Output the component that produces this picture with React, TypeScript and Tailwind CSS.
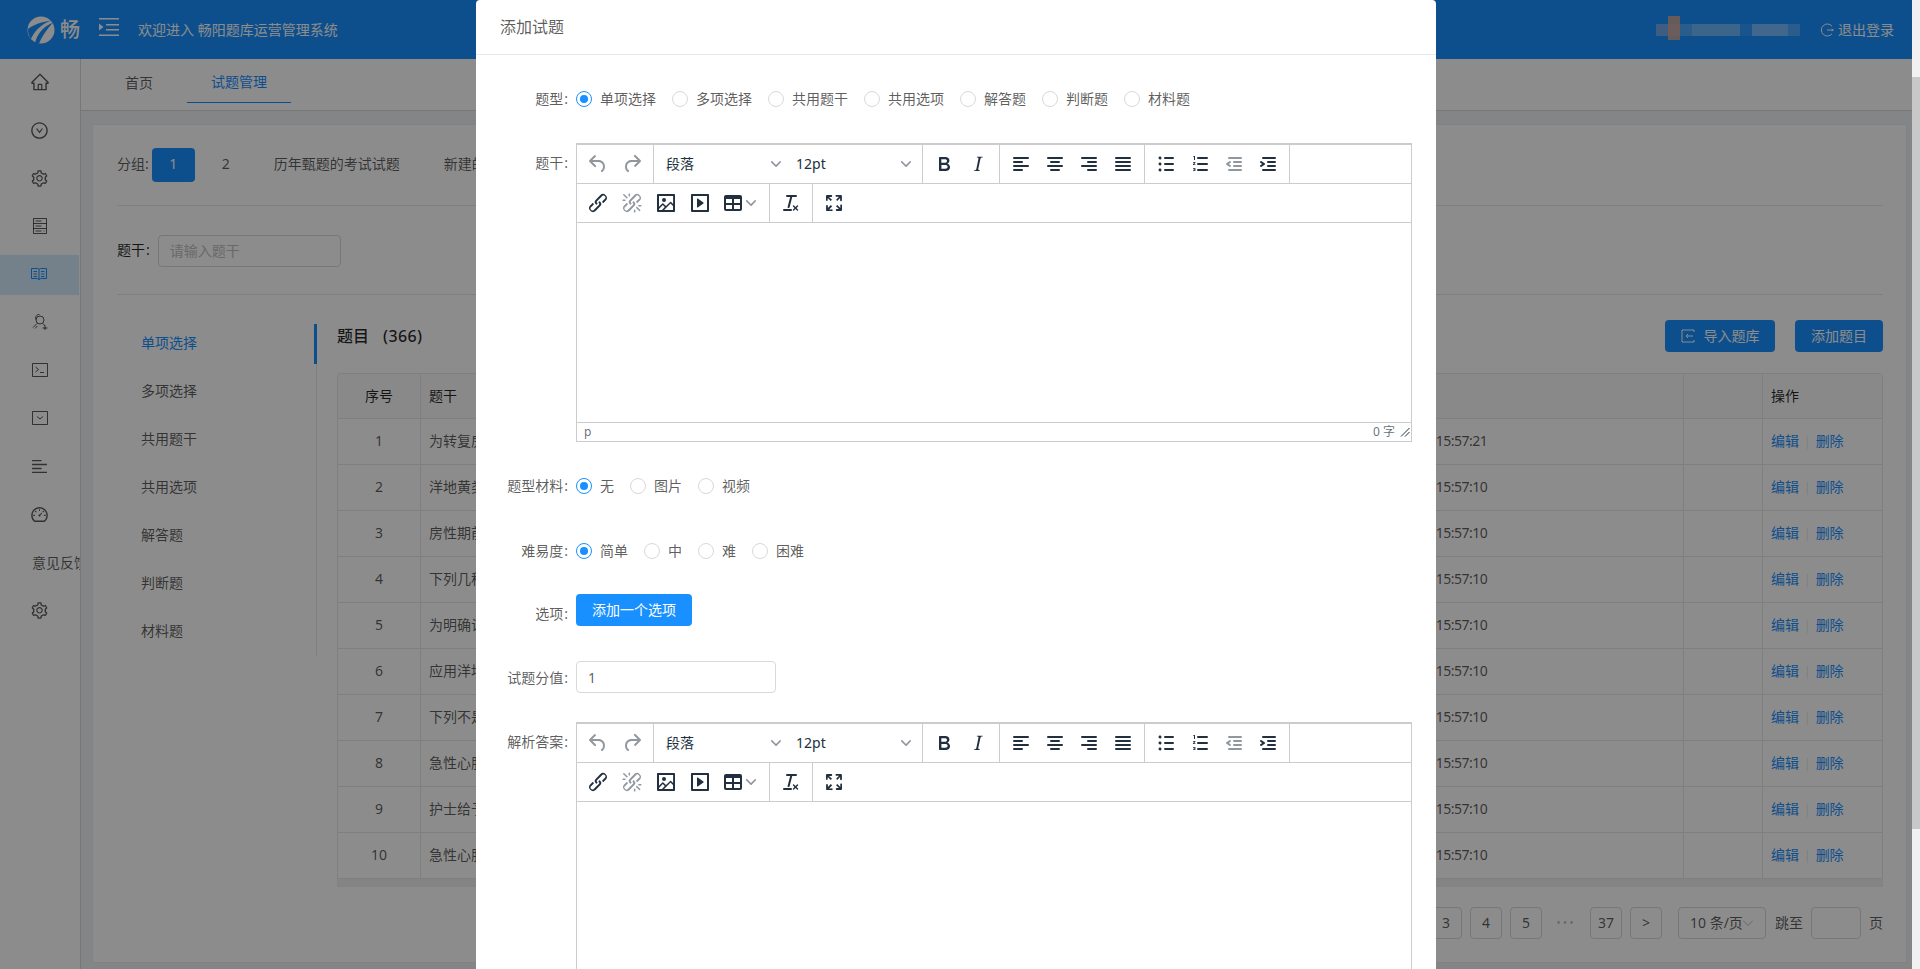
import type { ReactNode } from "react"
import {
  AiOutlineAlignLeft,
  AiOutlineDashboard,
  AiOutlineDownCircle,
  AiOutlineHome,
  AiOutlineSetting,
} from "react-icons/ai"

function ServerIcon() {
  return (
    <svg width="16" height="16" viewBox="0 0 16 16" fill="none" stroke="currentColor">
      <path d="M1.5.5h13v15h-13zM1.5 5.5h13M1.5 10.5h13M3.5 3h6M3.5 8h6M3.5 13h6M11.5 13h1" />
    </svg>
  )
}

function BookIcon() {
  return (
    <svg width="16" height="16" viewBox="0 0 16 16" fill="none" stroke="currentColor">
      <path d="M.5 2.5H6c1 0 2 .5 2 1.2 0-.7 1-1.2 2-1.2h5.500v10H10c-1 0-2 .5-2 1.500 0-1-1-1.500-2-1.500H.5zM8 3.700V14M2.500 5.500h3.500M2.500 8h3.500M2.500 10.500h3.500M10 5.500h3.500M10 8h3.500M10 10.500h3.500" />
    </svg>
  )
}

function UserAddIcon() {
  return (
    <svg width="16" height="16" viewBox="0 0 16 16" fill="none" stroke="currentColor">
      <circle cx="8" cy="6" r="4" />
      <path d="M4.500 1.800C5.200.7 6.200.3 7.500.5M4 5.500C3.200 4 3.500 2.800 4.500 1.800M5 9.500 1 13.500M3 14.500 5.500 12M11 9.500l2 2.500M10.500 14h5M13 11.500v4.500" />
    </svg>
  )
}

function TerminalIcon() {
  return (
    <svg width="16" height="16" viewBox="0 0 16 16" fill="none" stroke="currentColor">
      <path d="M.5 1.500h15v13H.5zM3.500 5l3 2.500-3 2.500M8 10.500h4" />
    </svg>
  )
}

function DownBoxIcon() {
  return (
    <svg width="16" height="16" viewBox="0 0 16 16" fill="none" stroke="currentColor">
      <path d="M.5 1.500h15v13H.5zM5 6.500l3 2.500 3-2.500" />
    </svg>
  )
}

const sideItems: { icon?: ReactNode; label?: string; active?: boolean }[] = [
  { icon: <AiOutlineHome className="text-[20px]" /> },
  { icon: <AiOutlineDownCircle className="text-[19px]" /> },
  { icon: <AiOutlineSetting className="text-[19px]" /> },
  { icon: <ServerIcon /> },
  { icon: <BookIcon />, active: true },
  { icon: <UserAddIcon /> },
  { icon: <TerminalIcon /> },
  { icon: <DownBoxIcon /> },
  { icon: <AiOutlineAlignLeft className="text-[19px]" /> },
  { icon: <AiOutlineDashboard className="text-[19px]" /> },
  { label: "意见反馈" },
  { icon: <AiOutlineSetting className="text-[19px]" /> },
]

const questionTypes = ["单项选择", "多项选择", "共用题干", "共用选项", "解答题", "判断题", "材料题"]

const rows = [
  ["1", "为转复房颤的药物", "15:57:21"],
  ["2", "洋地黄类药物", "15:57:10"],
  ["3", "房性期前收缩", "15:57:10"],
  ["4", "下列几种情况", "15:57:10"],
  ["5", "为明确诊断", "15:57:10"],
  ["6", "应用洋地黄", "15:57:10"],
  ["7", "下列不是", "15:57:10"],
  ["8", "急性心肌梗死", "15:57:10"],
  ["9", "护士给予", "15:57:10"],
  ["10", "急性心肌梗死", "15:57:10"],
]

const ICONS: Record<string, string> = {
  undo: "M6.4 8H12c3.7 0 6.2 2 6.8 5.1.6 2.7-.4 5.6-2.3 6.8a1 1 0 0 1-1-1.8c1.1-.6 1.8-2.7 1.4-4.6-.5-2.1-2.1-3.5-4.9-3.5H6.4l3.3 3.3a1 1 0 1 1-1.4 1.4l-5-5a1 1 0 0 1 0-1.4l5-5a1 1 0 0 1 1.4 1.4L6.4 8z",
  redo: "M17.6 10H12c-2.8 0-4.4 1.4-4.9 3.5-.4 2 .3 4 1.4 4.6a1 1 0 1 1-1 1.8c-2-1.2-2.9-4.1-2.3-6.8.6-3 3-5.1 6.8-5.1h5.6l-3.3-3.3a1 1 0 1 1 1.4-1.4l5 5a1 1 0 0 1 0 1.4l-5 5a1 1 0 0 1-1.4-1.4l3.3-3.3z",
  bold: "M7.8 19c-.3 0-.5 0-.6-.2l-.2-.5V5.7c0-.2 0-.4.2-.5l.6-.2h5c1.5 0 2.7.3 3.5 1 .7.6 1.1 1.4 1.1 2.5a3 3 0 0 1-.6 1.9c-.4.6-1 1-1.6 1.2.4.1.9.3 1.3.6s.8.7 1 1.2c.4.4.5 1 .5 1.6 0 1.3-.4 2.3-1.3 3-.8.7-2.1 1-3.8 1H7.8zm5-8.3c.6 0 1.2-.1 1.6-.5.4-.3.6-.7.6-1.3 0-1.1-.8-1.7-2.3-1.7H9.3v3.5h3.4zm.5 6c.7 0 1.3-.1 1.7-.4.4-.4.6-.9.6-1.5s-.2-1-.7-1.4c-.4-.3-1-.4-2-.4H9.4v3.8h4z",
  italic: "M16.7 4.7l-.1.9h-.3c-.6 0-1 0-1.4.3-.3.3-.4.6-.5 1.1l-2.1 9.8v.6c0 .5.4.8 1.4.8h.2l-.2.8H8l.2-.8h.2c1.1 0 1.8-.5 2-1.5l2-9.8.1-.5c0-.6-.4-.8-1.4-.8h-.3l.2-.9h5.8z",
  left: "M5 5h14a1 1 0 0 1 0 2H5a1 1 0 1 1 0-2zm0 4h8a1 1 0 0 1 0 2H5a1 1 0 1 1 0-2zm0 8h8a1 1 0 0 1 0 2H5a1 1 0 0 1 0-2zm0-4h14a1 1 0 0 1 0 2H5a1 1 0 0 1 0-2z",
  center: "M5 5h14a1 1 0 0 1 0 2H5a1 1 0 1 1 0-2zm3 4h8a1 1 0 0 1 0 2H8a1 1 0 1 1 0-2zm0 8h8a1 1 0 0 1 0 2H8a1 1 0 0 1 0-2zm-3-4h14a1 1 0 0 1 0 2H5a1 1 0 0 1 0-2z",
  right: "M5 5h14a1 1 0 0 1 0 2H5a1 1 0 1 1 0-2zm6 4h8a1 1 0 0 1 0 2h-8a1 1 0 0 1 0-2zm0 8h8a1 1 0 0 1 0 2h-8a1 1 0 0 1 0-2zm-6-4h14a1 1 0 0 1 0 2H5a1 1 0 0 1 0-2z",
  justify: "M5 5h14a1 1 0 0 1 0 2H5a1 1 0 1 1 0-2zm0 4h14a1 1 0 0 1 0 2H5a1 1 0 1 1 0-2zm0 4h14a1 1 0 0 1 0 2H5a1 1 0 0 1 0-2zm0 4h14a1 1 0 0 1 0 2H5a1 1 0 0 1 0-2z",
  bullist: "M11 5h8a1 1 0 0 1 0 2h-8a1 1 0 0 1 0-2zm0 6h8a1 1 0 0 1 0 2h-8a1 1 0 0 1 0-2zm0 6h8a1 1 0 0 1 0 2h-8a1 1 0 0 1 0-2zM4.5 6c0-.4.1-.8.4-1 .3-.4.7-.5 1.1-.5s.8.1 1 .4c.4.3.5.7.5 1.1s-.1.8-.4 1c-.3.4-.7.5-1.1.5s-.8-.1-1-.4c-.4-.3-.5-.7-.5-1.1zm0 6c0-.4.1-.8.4-1 .3-.4.7-.5 1.1-.5s.8.1 1 .4c.4.3.5.7.5 1.1s-.1.8-.4 1c-.3.4-.7.5-1.1.5s-.8-.1-1-.4c-.4-.3-.5-.7-.5-1.1zm0 6c0-.4.1-.8.4-1 .3-.4.7-.5 1.1-.5s.8.1 1 .4c.4.3.5.7.5 1.1s-.1.8-.4 1c-.3.4-.7.5-1.1.5s-.8-.1-1-.4c-.4-.3-.5-.7-.5-1.1z",
  numlist: "M10 17h9a1 1 0 0 1 0 2h-9a1 1 0 0 1 0-2zm0-6h9a1 1 0 0 1 0 2h-9a1 1 0 0 1 0-2zm0-6h9a1 1 0 0 1 0 2h-9a1 1 0 0 1 0-2zM5.4 4H7v4H6V5h-.6V4zM5 10h2.4v.8L6 12.2h1.4v.8H5v-.8l1.4-1.4H5V10zm0 6h2.4v3H5v-.7h1.5v-.5H5.6v-.6h.9v-.5H5V16z",
  outdent: "M7 5h12a1 1 0 0 1 0 2H7a1 1 0 1 1 0-2zm5 4h7a1 1 0 0 1 0 2h-7a1 1 0 0 1 0-2zm0 4h7a1 1 0 0 1 0 2h-7a1 1 0 0 1 0-2zm-5 4h12a1 1 0 0 1 0 2H7a1 1 0 0 1 0-2zm1.6-3.8a1 1 0 0 1-1.2 1.6l-3-2a1 1 0 0 1 0-1.6l3-2a1 1 0 0 1 1.2 1.6L6.8 12l1.8 1.2z",
  indent: "M7 5h12a1 1 0 0 1 0 2H7a1 1 0 1 1 0-2zm5 4h7a1 1 0 0 1 0 2h-7a1 1 0 0 1 0-2zm0 4h7a1 1 0 0 1 0 2h-7a1 1 0 0 1 0-2zm-5 4h12a1 1 0 0 1 0 2H7a1 1 0 0 1 0-2zm-2.6-3.8L6.2 12l-1.8-1.2a1 1 0 0 1 1.2-1.6l3 2a1 1 0 0 1 0 1.6l-3 2a1 1 0 1 1-1.2-1.6z",
  link: "M6.2 12.3a1 1 0 0 1 1.4 1.4l-2 2a2 2 0 1 0 2.6 2.8l4.8-4.8a1 1 0 0 0 0-1.4 1 1 0 1 1 1.4-1.3 2.9 2.9 0 0 1 0 4L9.6 20a3.9 3.9 0 0 1-5.5-5.5l2-2zm11.6-.6a1 1 0 0 1-1.4-1.4l2-2a2 2 0 1 0-2.6-2.8L11 10.3a1 1 0 0 0 0 1.4A1 1 0 1 1 9.6 13a2.9 2.9 0 0 1 0-4L14.4 4a3.9 3.9 0 0 1 5.5 5.5l-2 2z",
  unlink: "M6.2 12.3a1 1 0 0 1 1.4 1.4l-2.1 2a2 2 0 1 0 2.7 2.8l4.8-4.8a1 1 0 0 0 0-1.4 1 1 0 1 1 1.4-1.3 2.9 2.9 0 0 1 0 4L9.6 20a3.9 3.9 0 0 1-5.5-5.5l2-2zm11.6-.6a1 1 0 0 1-1.4-1.4l2.1-2a2 2 0 1 0-2.7-2.8L11 10.3a1 1 0 0 0 0 1.4A1 1 0 1 1 9.6 13a2.9 2.9 0 0 1 0-4L14.4 4a3.9 3.9 0 0 1 5.5 5.5l-2 2zM7.6 6.3a.8.8 0 0 1-1 1.1L3.3 4.2a.7.7 0 1 1 1-1l3.2 3.1zM5.1 8.6a.8.8 0 0 1 0 1.5H3a.8.8 0 0 1 0-1.5H5zm5-3.5a.8.8 0 0 1-1.5 0V3a.8.8 0 0 1 1.5 0v2zm6 11.8a.8.8 0 0 1 1-1l3.2 3.2a.8.8 0 0 1-1 1L16 17zm-2.2 2a.8.8 0 0 1 1.5 0V21a.8.8 0 0 1-1.5 0V19zm5-3.5a.7.7 0 1 1 0-1.5H21a.8.8 0 0 1 0 1.5H19z",
  image: "M5 15.7l3.3-3.2c.3-.3.7-.3 1 0L12 15l4.1-4c.3-.4.8-.4 1 0l2 1.9V5H5v10.7zM5 18V19h3l2.8-2.9-2-2L5 17.9zm14-3l-2.5-2.4-6.4 6.5H19v-4zM4 3h16c.6 0 1 .4 1 1v16c0 .6-.4 1-1 1H4a1 1 0 0 1-1-1V4c0-.6.4-1 1-1zm6 8a2 2 0 1 0 0-4 2 2 0 0 0 0 4z",
  media: "M4 3h16c.6 0 1 .4 1 1v16c0 .6-.4 1-1 1H4a1 1 0 0 1-1-1V4c0-.6.4-1 1-1zm1 2v14h14V5H5zm4.8 2.6l5.6 4a.5.5 0 0 1 0 .8l-5.6 4A.5.5 0 0 1 9 16V8a.5.5 0 0 1 .8-.4z",
  table: "M19 4a2 2 0 0 1 2 2v12a2 2 0 0 1-2 2H5a2 2 0 0 1-2-2V6c0-1.1.9-2 2-2h14zM5 14v4h6v-4H5zm14 0h-6v4h6v-4zm0-6h-6v4h6V8zM5 12h6V8H5v4z",
  clear: "M13.2 6a1 1 0 0 1 0 .2l-2.6 10a1 1 0 0 1-1 .8h-.2a.8.8 0 0 1-.8-1l2.6-10H8a1 1 0 1 1 0-2h9a1 1 0 0 1 0 2h-3.8zM5 18h7a1 1 0 0 1 0 2H5a1 1 0 0 1 0-2zm13 1.5L16.5 18 15 19.5a.7.7 0 0 1-1-1l1.5-1.5-1.5-1.5a.7.7 0 0 1 1-1l1.5 1.5 1.5-1.5a.7.7 0 0 1 1 1L17.5 17l1.5 1.5a.7.7 0 0 1-1 1z",
  fullscreen: "M15.3 10l-1.2-1.3 2.9-3h-2.3a.9.9 0 1 1 0-1.7H19c.5 0 .9.4.9.9v4.4a.9.9 0 1 1-1.8 0V7l-2.9 3zm0 4l3 3v-2.3a.9.9 0 1 1 1.7 0V19c0 .5-.4.9-.9.9h-4.4a.9.9 0 1 1 0-1.8H17l-3-2.9 1.3-1.2zM10 15.4l-2.9 3h2.3a.9.9 0 1 1 0 1.7H5a.9.9 0 0 1-.9-.9v-4.4a.9.9 0 1 1 1.8 0V17l2.9-3 1.2 1.3zM8.7 10L5.7 7v2.3a.9.9 0 0 1-1.7 0V5c0-.5.4-.9.9-.9h4.4a.9.9 0 0 1 0 1.8H7l3 2.9-1.3 1.2z",
}

function Chevron() {
  return (
    <svg width="10" height="10" viewBox="0 0 10 10" className="shrink-0 fill-[#222f3e]/50">
      <path d="M8.7 2.2c.3-.3.8-.3 1 0 .4.4.4.9 0 1.2L5.7 7.8c-.3.3-.9.3-1.2 0L.2 3.4a.8.8 0 0 1 0-1.2c.3-.3.8-.3 1.1 0L5 6l3.7-3.8z" />
    </svg>
  )
}

function ToolBtn({ name, off }: { name: string; off?: boolean }) {
  return (
    <span className="flex h-[38px] w-[34px] items-center justify-center">
      <svg width="24" height="24" viewBox="0 0 24 24" className={off ? "fill-[#222f3e]/50" : "fill-[#222f3e]"}>
        <path d={ICONS[name]} fillRule="nonzero" />
      </svg>
    </span>
  )
}

function Group({ children, last }: { children: ReactNode; last?: boolean }) {
  return <div className={`flex px-1 ${last ? "" : "border-r border-[#ccc]"}`}>{children}</div>
}

function Editor() {
  return (
    <div className="w-[836px] border border-t-2 border-[#ccc] bg-white">
      <div className="flex h-[39px] border-b border-[#ccc]">
        <Group>
          <ToolBtn name="undo" off />
          <ToolBtn name="redo" off />
        </Group>
        <div className="flex border-r border-[#ccc] text-[#222f3e]">
          <span className="flex h-[38px] w-[130px] items-center justify-between pl-3 pr-[3px]">
            段落
            <Chevron />
          </span>
          <span className="flex h-[38px] w-[138px] items-center justify-between pl-3 pr-[11px]">
            12pt
            <Chevron />
          </span>
        </div>
        <Group>
          <ToolBtn name="bold" />
          <ToolBtn name="italic" />
        </Group>
        <Group>
          <ToolBtn name="left" />
          <ToolBtn name="center" />
          <ToolBtn name="right" />
          <ToolBtn name="justify" />
        </Group>
        <Group>
          <ToolBtn name="bullist" />
          <ToolBtn name="numlist" />
          <ToolBtn name="outdent" off />
          <ToolBtn name="indent" />
        </Group>
      </div>
      <div className="flex h-[39px] border-b border-[#ccc]">
        <Group>
          <ToolBtn name="link" />
          <ToolBtn name="unlink" off />
          <ToolBtn name="image" />
          <ToolBtn name="media" />
          <span className="flex h-[38px] w-[48px] items-center gap-px pl-[4px]">
            <svg width="24" height="24" viewBox="0 0 24 24" className="shrink-0 fill-[#222f3e]">
              <path d={ICONS.table} />
            </svg>
            <Chevron />
          </span>
        </Group>
        <Group>
          <ToolBtn name="clear" />
        </Group>
        <Group last>
          <ToolBtn name="fullscreen" />
        </Group>
      </div>
      <div className="h-[200px] border-b border-[#ccc]" />
      <div className="flex h-[18px] items-center justify-between pl-[7px] pr-px text-xs text-[#222f3e]/70">
        <span>p</span>
        <span className="flex items-center gap-[5px]">
          0 字
          <svg width="10" height="10" viewBox="0 0 10 10" className="stroke-[#222f3e]">
            <path d="M1 9.500 9.500 1M5 9.500 9.500 5" />
          </svg>
        </span>
      </div>
    </div>
  )
}

function Radio({ label, checked }: { label: string; checked?: boolean }) {
  return (
    <label className="mr-4 flex items-center gap-2">
      <span
        className={`flex h-4 w-4 items-center justify-center rounded-full border ${
          checked ? "border-[#1890ff]" : "border-[#d9d9d9]"
        }`}
      >
        {checked && <span className="h-2 w-2 rounded-full bg-[#1890ff]" />}
      </span>
      <span className="text-black/65">{label}</span>
    </label>
  )
}

function FormRow({ label, labelTop, mt, children }: { label: string; labelTop: string; mt: string; children: ReactNode }) {
  return (
    <div className={`flex ${mt}`}>
      <div className={`w-[100px] shrink-0 pr-2 text-right leading-[22px] text-black/65 ${labelTop}`}>
        {label}
        <span className="ml-px">:</span>
      </div>
      {children}
    </div>
  )
}

function PageBtn({ children }: { children?: ReactNode }) {
  return (
    <span className="flex h-8 w-8 items-center justify-center rounded border border-[#d9d9d9] bg-white pb-px text-black/65">
      {children}
    </span>
  )
}

export default function App() {
  return (
    <div className="flex h-screen w-full overflow-hidden bg-[#f1f1f1] text-sm text-black/65 [font-family:'Noto_Sans','Noto_Sans_CJK_SC',sans-serif]">
      <div className="relative flex min-w-0 flex-1 flex-col bg-[#f0f2f5]">
        <header className="flex h-[59px] shrink-0 items-center bg-[#1890ff] text-white">
          <div className="ml-[27px] flex w-[72px] items-center gap-[5px]">
            <svg width="28" height="28" viewBox="0 0 28 28">
              <circle cx="14" cy="14" r="13.500" fill="#fff" />
              <path d="M1 13C6 9 14 6 24 4.500 15 8 8 14 4 23 2 20 .8 17 1 13Z" fill="#1890ff" />
              <path d="M8 27C10 18 16 11 26 6.500 20 13 15 20 12 27.500Z" fill="#1890ff" />
            </svg>
            <span className="text-xl leading-none [font-weight:500]">畅</span>
          </div>
          <svg width="20" height="18" viewBox="0 0 20 18" className="-mt-[5px] fill-white">
            <path d="M0 0h20v1.500H0zM7 6h13v1.500H7zM7 11h13v1.500H7zM0 16.500h20V18H0zM0 5.500l4.500 3.500L0 12.500z" />
          </svg>
          <span className="ml-[19px]">欢迎进入 畅阳题库运营管理系统</span>
          <div className="ml-auto mr-[20px] flex h-3 w-[144px] bg-white/10">
            <span className="w-3 bg-[#d8c0d0]/40" />
            <span className="-mb-1 -mt-2 w-3 bg-[#ffb080]/70" />
            <span className="w-3 bg-white/15" />
            <span className="w-12 bg-white/30" />
            <span className="w-3" />
            <span className="w-9 bg-white/35" />
            <span className="w-3 bg-white/15" />
          </div>
          <span className="mr-[18px] flex items-center gap-1">
            <svg width="14" height="14" viewBox="0 0 14 14" fill="none" className="stroke-white">
              <path d="M12 3.200A6 6 0 1 0 12 10.800M7 7h6.500M11.800 5.800 13.200 7l-1.400 1.200" />
            </svg>
            退出登录
          </span>
        </header>

        <div className="flex min-h-0 flex-1">
          <aside className="w-20 shrink-0 overflow-hidden bg-white pt-1">
            {sideItems.map((item, i) => (
              <div
                key={i}
                className={`mb-2 flex h-10 items-center whitespace-nowrap ${
                  item.active ? "mr-px bg-[#d5ecfb] text-[#1890ff]" : "text-black/65"
                }`}
              >
                {item.icon ? (
                  <span className="-mt-[2px] flex w-20 justify-center pr-px">{item.icon}</span>
                ) : (
                  <span className="pl-8">{item.label}</span>
                )}
              </div>
            ))}
          </aside>

          <main className="flex min-w-0 flex-1 flex-col border-l border-black/10">
            <div className="flex h-[52px] shrink-0 items-start border-b border-[#d9d9d9] bg-white pl-5 pt-px">
              <span className="flex h-[43px] w-[76px] items-center justify-center pt-[2px]">首页</span>
              <span className="ml-[10px] flex h-[43px] w-[104px] items-center justify-center border-b border-[#1890ff] pt-[2px] text-[#1890ff]">
                试题管理
              </span>
            </div>

            <div className="min-h-0 flex-1 pb-[6px] pl-[11px] pr-[5px] pt-[13px]">
              <section className="h-full border border-[#ebedf0] bg-white pl-6 pr-[23px] pt-[23px]">
                <div className="flex h-[34px] items-center">
                  <span className="pb-[2px]">分组:</span>
                  <span className="ml-[3px] flex h-[34px] w-[43px] items-center justify-center rounded bg-[#1890ff] pb-[2px] text-white">1</span>
                  <span className="ml-[27px] pb-[2px]">2</span>
                  <span className="ml-[44px] pb-[2px]">历年甄题的考试试题</span>
                  <span className="ml-[44px] pb-[2px]">新建的分组</span>
                </div>
                <div className="mt-[23px] border-t border-[#e8e8e8]" />
                <div className="mt-[29px] flex h-8 items-center">
                  <span className="pb-[2px] text-black/85">
                    题干<span className="ml-px">:</span>
                  </span>
                  <input
                    readOnly
                    placeholder="请输入题干"
                    className="ml-2 h-8 w-[183px] rounded border border-[#d9d9d9] bg-white px-[11px] pb-[2px] placeholder:text-[#bfbfbf]"
                  />
                </div>
                <div className="mt-[27px] border-t border-[#e8e8e8]" />

                <div className="mt-[25px] flex">
                  <nav className="relative mt-1 h-[332px] w-[200px] shrink-0 border-r border-[#e8e8e8]">
                    {questionTypes.map((t, i) => (
                      <div
                        key={t}
                        className={`mb-2 flex h-10 items-center pb-[2px] pl-6 ${i === 0 ? "-mr-px border-r-[3px] border-[#1890ff] text-[#1890ff]" : ""}`}
                      >
                        {t}
                      </div>
                    ))}
                  </nav>

                  <div className="ml-5 min-w-0 flex-1">
                    <div className="flex h-8 items-center">
                      <h3 className="text-base font-medium text-black/85">
                        题目<span className="ml-[14px] tracking-[0.4px]">(366)</span>
                      </h3>
                      <button className="ml-auto flex h-8 w-[110px] items-center justify-center gap-[9px] rounded bg-[#1890ff] text-white">
                        <svg width="14" height="14" viewBox="0 0 14 14" fill="none" className="stroke-white">
                          <path d="M13 3V1H1v12h12v-2M12 7H5M7 5 5 7l2 2" />
                        </svg>
                        导入题库
                      </button>
                      <button className="ml-5 h-8 w-[88px] rounded bg-[#1890ff] text-white">添加题目</button>
                    </div>

                    <div className="mt-[21px]">
                      <table className="w-full table-fixed border-separate border-spacing-0 overflow-hidden rounded-t border-l border-t border-[#e8e8e8]">
                        <colgroup>
                          <col className="w-[83px]" />
                          <col />
                          <col className="w-[333px]" />
                          <col className="w-[79px]" />
                          <col className="w-[120px]" />
                        </colgroup>
                        <thead>
                          <tr className="h-[45px] bg-[#fafafa] text-black/85">
                            <th className="border-b border-r border-[#e8e8e8] font-normal">序号</th>
                            <th className="border-b border-r border-[#e8e8e8] pl-2 text-left font-normal">题干</th>
                            <th className="border-b border-r border-[#e8e8e8] pl-2 text-left font-normal">创建时间</th>
                            <th className="border-b border-r border-[#e8e8e8]" />
                            <th className="border-b border-r border-[#e8e8e8] pl-2 text-left font-normal">操作</th>
                          </tr>
                        </thead>
                        <tbody>
                          {rows.map(([n, q, time]) => (
                            <tr key={n} className="h-[46px]">
                              <td className="border-b border-r border-[#e8e8e8] pb-[2px] text-center">{n}</td>
                              <td className="truncate border-b border-r border-[#e8e8e8] pb-[2px] pl-2">{q}</td>
                              <td className="whitespace-nowrap border-b border-r border-[#e8e8e8] pb-[2px] pl-2">
                                2020-11-26 <span className="tracking-[-0.5px]">{time}</span>
                              </td>
                              <td className="border-b border-r border-[#e8e8e8]" />
                              <td className="border-b border-r border-[#e8e8e8] pb-[2px] pl-2 text-[#1890ff]">
                                编辑<span className="mx-[5px] text-xs text-[#e8e8e8]">|</span>删除
                              </td>
                            </tr>
                          ))}
                        </tbody>
                      </table>
                      <div className="h-2 bg-[#f0f0f0]" />
                    </div>

                    <div className="mt-5 flex h-8 items-center justify-end gap-2">
                      <PageBtn>&lt;</PageBtn>
                      <PageBtn>1</PageBtn>
                      <PageBtn>2</PageBtn>
                      <PageBtn>3</PageBtn>
                      <PageBtn>4</PageBtn>
                      <PageBtn>5</PageBtn>
                      <span className="flex h-8 w-8 items-center justify-center text-xs tracking-[2px] text-black/25">•••</span>
                      <PageBtn>37</PageBtn>
                      <PageBtn>&gt;</PageBtn>
                      <span className="ml-2 flex h-8 w-[88px] items-center justify-between whitespace-nowrap rounded border border-[#d9d9d9] pb-px pl-[11px] pr-[12px]">
                        10 条/页
                        <svg width="10" height="10" viewBox="0 0 10 10" fill="none" className="stroke-black/25">
                          <path d="M0 2.500 5 7.500 10 2.500" />
                        </svg>
                      </span>
                      <span className="ml-px pb-px">跳至</span>
                      <span className="h-8 w-[50px] rounded border border-[#d9d9d9] bg-white" />
                      <span className="pb-px">页</span>
                    </div>
                  </div>
                </div>
              </section>
            </div>
          </main>
        </div>

        <div className="absolute inset-0 bg-black/45" />

        <div className="absolute left-[476px] top-0 h-screen w-[960px] overflow-hidden rounded-t bg-white">
          <div className="flex h-[55px] items-center border-b border-[#e8e8e8] pl-6 text-base">添加试题</div>
          <div className="pt-[33px]">
            <FormRow label="题型" labelTop="" mt="">
              <div className="flex h-[22px]">
                {questionTypes.map((t, i) => (
                  <Radio key={t} label={t} checked={i === 0} />
                ))}
              </div>
            </FormRow>
            <FormRow label="题干" labelTop="pt-[9px]" mt="mt-[33px]">
              <Editor />
            </FormRow>
            <FormRow label="题型材料" labelTop="" mt="mt-[33px]">
              <div className="flex h-[22px]">
                <Radio label="无" checked />
                <Radio label="图片" />
                <Radio label="视频" />
              </div>
            </FormRow>
            <FormRow label="难易度" labelTop="" mt="mt-[43px]">
              <div className="flex h-[22px]">
                <Radio label="简单" checked />
                <Radio label="中" />
                <Radio label="难" />
                <Radio label="困难" />
              </div>
            </FormRow>
            <FormRow label="选项" labelTop="pt-[9px]" mt="mt-[32px]">
              <button className="h-8 w-[116px] rounded bg-[#1890ff] text-white">添加一个选项</button>
            </FormRow>
            <FormRow label="试题分值" labelTop="pt-[6px]" mt="mt-[35px]">
              <input readOnly value="1" className="h-8 w-[200px] rounded border border-[#d9d9d9] px-[11px] text-black/65" />
            </FormRow>
            <FormRow label="解析答案" labelTop="pt-[9px]" mt="mt-[29px]">
              <Editor />
            </FormRow>
          </div>
        </div>
      </div>

      <div className="w-2 shrink-0 pt-[77px]">
        <div className="h-[752px] bg-[#c8c8c8]" />
      </div>
    </div>
  )
}
